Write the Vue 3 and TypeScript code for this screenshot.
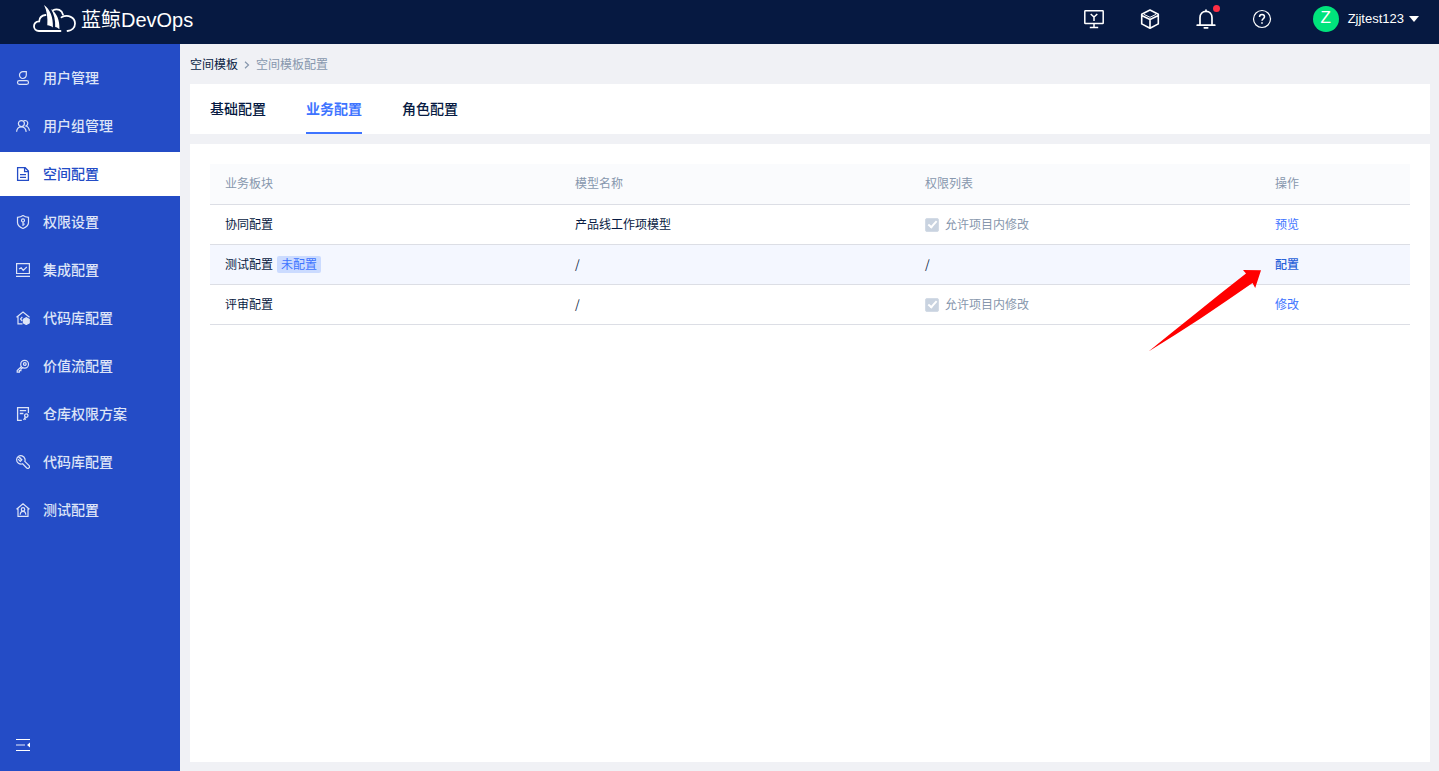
<script setup lang="ts">
import { ref } from 'vue'

interface MenuItem {
  icon: string
  label: string
}

interface Row {
  name: string
  badge?: string
  model: string
  editable: boolean
  action: string
  current?: boolean
}

const menu: MenuItem[] = [
  { icon: 'user', label: '用户管理' },
  { icon: 'group', label: '用户组管理' },
  { icon: 'doc', label: '空间配置' },
  { icon: 'shield', label: '权限设置' },
  { icon: 'chart', label: '集成配置' },
  { icon: 'repo', label: '代码库配置' },
  { icon: 'key', label: '价值流配置' },
  { icon: 'plan', label: '仓库权限方案' },
  { icon: 'wrench', label: '代码库配置' },
  { icon: 'home', label: '测试配置' },
]
const activeMenu = ref(2)

const tabs: string[] = ['基础配置', '业务配置', '角色配置']
const activeTab = ref(1)

const columns: string[] = ['业务板块', '模型名称', '权限列表', '操作']
const rows: Row[] = [
  { name: '协同配置', model: '产品线工作项模型', editable: true, action: '预览' },
  { name: '测试配置', badge: '未配置', model: '/', editable: false, action: '配置', current: true },
  { name: '评审配置', model: '/', editable: true, action: '修改' },
]
</script>

<template>
  <div class="app">
    <header class="header">
      <a class="brand" href="#">
        <svg class="brand-mark" viewBox="0 0 44 28" aria-hidden="true">
          <g fill="none" stroke="#fff" stroke-width="1.8" stroke-linecap="round">
            <path d="M28 26H6.500C3.500 26 1.500 24 1.500 21.300c0-2.800 2.200-4.800 5.200-5 .2-3.500 2.600-5.800 6.300-6.300" />
            <path d="M20.500 5.200c4.500-2.200 9-.2 10 4.500" />
            <path d="M29 12.300c6.500-3.300 13.500 0 13.500 6.200 0 4-3 7-7.500 7.500" />
          </g>
          <path fill="#fff" d="M11.500 0c6 4.500 9.200 11.500 8.900 22.500-1.600-1.300-3.400-2-5.600-2.200C15.300 12.500 14.500 6 11.500 0z" />
          <path fill="#fff" d="M18.500 4c6 4.500 8.700 11 8.400 20.300-1.300-1.300-2.600-2-4.200-2.300C23 15 21.500 9 18.500 4z" />
        </svg>
        <span class="brand-cn">蓝鲸</span>
        <span class="brand-en">DevOps</span>
      </a>

      <div class="tools">
        <button class="tool" type="button" aria-label="工作台">
          <svg viewBox="0 0 20 20" fill="none" stroke="currentColor" stroke-width="1.500">
            <rect x=".8" y="1.800" width="18.400" height="12.800" rx=".6" />
            <path d="M10 14.600v3.600M5.800 18.600h8.400M6.700 5l3.300 3 3.300-3M10 8v4" />
          </svg>
        </button>
        <button class="tool" type="button" aria-label="应用">
          <svg viewBox="0 0 20 20" fill="none" stroke="currentColor" stroke-width="1.600" stroke-linejoin="round">
            <path d="M10 1l8.300 4.200v9.700L10 19.200l-8.300-4.300V5.200zM10 10.500V19M1.700 6.500L10 10.500l8.300-4" />
            <path d="M4 5.400L10 8.300l6-2.900" stroke-width="1" />
          </svg>
        </button>
        <button class="tool" type="button" aria-label="通知">
          <svg viewBox="0 0 20 20" fill="none" stroke="currentColor" stroke-width="1.700" stroke-linecap="round">
            <path d="M4 16V8.800C4 5 6.600 2.400 10 2.400S16 5 16 8.800V16M1.200 16.200h17.600M8.300 18.800h3.400M10 1v1" />
          </svg>
          <span class="dot"></span>
        </button>
        <button class="tool" type="button" aria-label="帮助">
          <svg viewBox="0 0 20 20" fill="none" stroke="currentColor">
            <circle cx="10" cy="10" r="8.500" stroke-width="1.200" />
            <path d="M7.500 8c0-1.500 1-2.500 2.500-2.500s2.500 1 2.500 2.300c0 1.700-2.500 1.900-2.500 4" stroke-width="1.500" />
            <path d="M10 13.200v1.600" stroke-width="1.600" />
          </svg>
        </button>
        <button class="account" type="button">
          <span class="avatar">Z</span>
          <span class="account-name">Zjjtest123</span>
          <span class="caret"></span>
        </button>
      </div>
    </header>

    <div class="body">
      <aside class="sidebar">
        <nav class="menu">
          <a
            v-for="(item, i) in menu"
            :key="i"
            href="#"
            class="menu-item"
            :class="{ active: i === activeMenu }"
            @click.prevent="activeMenu = i"
          >
            <svg class="menu-icon" viewBox="0 0 14 14" fill="none" stroke="currentColor" stroke-width="1.200" aria-hidden="true">
              <template v-if="item.icon === 'user'">
                <path d="M10.300.7H7.200a3.400 3.400 0 1 0 3.100 3.400z" />
                <rect x="1.500" y="9.700" width="11" height="3.600" rx="1.800" />
              </template>
              <template v-else-if="item.icon === 'group'">
                <circle cx="5.400" cy="4.600" r="3" />
                <path d="M.6 12.800c.2-3 2.200-5 4.800-5s4.400 2 4.800 5M7.600 1.800c2.600-1 4.600.8 4.100 3-.2 1-.9 1.700-1.700 2.200 1.900.6 3.200 2.300 3.400 4.800" />
              </template>
              <template v-else-if="item.icon === 'doc'">
                <path d="M1.600.7h7.600l3.200 3.400v9.200H1.600zM8.600.9v3.700h3.600M4 7.700h6M4 10.300h6" stroke-width="1.300" />
              </template>
              <template v-else-if="item.icon === 'shield'">
                <path d="M7 .6c1.600 1.100 3.300 1.600 5.500 1.800v5.200c0 2.800-2.200 4.600-5.500 5.900-3.300-1.300-5.500-3.100-5.500-5.900V2.400C3.700 2.200 5.400 1.700 7 .6z" />
                <circle cx="7" cy="5.400" r="1.500" />
                <path d="M7 7v4M7 9.200h1.700" />
              </template>
              <template v-else-if="item.icon === 'chart'">
                <path d="M.6.700h12.800v9.800H.6zM0 13.300h14M3 6l2.200-1.200 2 2.600L10.800 4" stroke-width="1.200" />
              </template>
              <template v-else-if="item.icon === 'repo'">
                <path d="M.5 6.200L7 1l6.500 5.200M2 5.400v7.500h4.500M6.300 5.800L4.500 8l1.800 2.200" stroke-width="1.200" />
                <path d="M10.300 6.700l2.900 1.700v3.400l-2.900 1.700-2.900-1.700V8.400z" fill="currentColor" />
              </template>
              <template v-else-if="item.icon === 'key'">
                <circle cx="8.600" cy="5.200" r="3.900" />
                <circle cx="8.800" cy="5" r="1.400" />
                <path d="M5.500 7.500l-4.300 4v1.700h2.200v-1.600h1.500v-1.500l2-1.500" />
              </template>
              <template v-else-if="item.icon === 'plan'">
                <path d="M12.400 6V.700H1.600v12.600h4.200M3.800 3.700h6.400M3.800 6.500h3.600" stroke-width="1.300" />
                <circle cx="10.300" cy="8.600" r="1.700" stroke-width="1.300" />
                <path d="M9.300 10l-1.700 3M8.500 11.500l1.500.9" stroke-width="1.300" />
              </template>
              <template v-else-if="item.icon === 'wrench'">
                <path d="M2.300 1.500C4.600-.1 8 .8 8.900 3.700c.3 1 .2 1.900-.1 2.700l4.300 4.200c1.300 1.700-.8 3.700-2.400 2.400L6.600 8.800C3.600 9.800.6 7.700.6 4.700c0-1.200.6-2.300 1.700-3.200zM2.300 1.500l3 3M2.200 4.200L4.300 6.300l1.600-1.600-2.300-2.400" />
              </template>
              <template v-else>
                <path d="M.5 6.300L7 .8l6.500 5.500M2 5.200v8.100h10V5.200" />
                <circle cx="7" cy="6.400" r="1.700" />
                <path d="M4.200 11.800c.1-2.200 1.200-3.400 2.800-3.400s2.700 1.200 2.800 3.400" />
              </template>
            </svg>
            <span>{{ item.label }}</span>
          </a>
        </nav>
        <button class="collapse" type="button" aria-label="收起菜单">
          <svg viewBox="0 0 14 14" aria-hidden="true">
            <path d="M0 1.500h14M0 12.500h14" stroke="#fff" stroke-width="1.200" />
            <path d="M0 7h9" stroke="#fff" stroke-width="1.500" opacity=".6" />
            <path d="M14 4.500v5L11 7z" fill="#fff" />
          </svg>
        </button>
      </aside>

      <main class="content">
        <nav class="crumbs">
          <a href="#">空间模板</a>
          <svg viewBox="0 0 6 8" fill="none" stroke="#8797ad" stroke-width="1.200" aria-hidden="true">
            <path d="M1 .8L4.500 4 1 7.200" />
          </svg>
          <span>空间模板配置</span>
        </nav>

        <div class="tabs" role="tablist">
          <button
            v-for="(tab, i) in tabs"
            :key="tab"
            class="tab"
            type="button"
            role="tab"
            :aria-selected="i === activeTab"
            :class="{ active: i === activeTab }"
            @click="activeTab = i"
          >
            {{ tab }}
          </button>
        </div>

        <section class="panel">
          <table class="table">
            <thead>
              <tr>
                <th v-for="c in columns" :key="c" scope="col">{{ c }}</th>
              </tr>
            </thead>
            <tbody>
              <tr v-for="row in rows" :key="row.name" :class="{ current: row.current }">
                <td>
                  <div class="cell">
                    <span>{{ row.name }}</span>
                    <span v-if="row.badge" class="badge">{{ row.badge }}</span>
                  </div>
                </td>
                <td :class="{ empty: row.model === '/' }">{{ row.model }}</td>
                <td :class="{ empty: !row.editable }">
                  <label v-if="row.editable" class="check">
                    <input type="checkbox" checked disabled />
                    <span>允许项目内修改</span>
                  </label>
                  <template v-else>/</template>
                </td>
                <td class="action">
                  <a href="#">{{ row.action }}</a>
                  <svg v-if="row.current" class="pointer" viewBox="0 0 114 82" aria-hidden="true">
                    <path d="M113 .3L95 0l3 3.500C64 30 32 56 .5 81.500 36 60 70 37 104.500 13l2.700 5z" fill="#f00" />
                  </svg>
                </td>
              </tr>
            </tbody>
          </table>
        </section>
      </main>
    </div>
  </div>
</template>

<style>
body {
  margin: 0;
}
</style>

<style scoped>
.app {
  display: flex;
  flex-direction: column;
  min-height: 100vh;
  background: #f0f1f5;
  color: #071a42;
  font-family: "Liberation Sans", "Noto Sans CJK SC", sans-serif;
  font-size: 12px;
  line-height: 18px;
}

.app *,
.app *::before,
.app *::after {
  box-sizing: border-box;
}

a {
  color: inherit;
  text-decoration: none;
}

button {
  padding: 0;
  border: 0;
  background: none;
  color: inherit;
  font: inherit;
  cursor: pointer;
}

svg {
  display: block;
}

.header {
  display: flex;
  align-items: center;
  justify-content: space-between;
  height: 44px;
  padding: 0 20px 6px 32px;
  background: #061941;
  color: #fff;
}

.brand {
  display: flex;
  align-items: center;
  font-size: 20px;
  line-height: 28px;
}

.brand-mark {
  width: 45px;
  height: 28px;
  margin-right: 4px;
}

.brand-cn,
.brand-en {
  padding-top: 2px;
}

.tools {
  display: flex;
  align-items: center;
  gap: 36px;
}

.tool {
  position: relative;
  width: 20px;
  height: 20px;
}

.tool svg {
  width: 20px;
  height: 20px;
}

.dot {
  position: absolute;
  top: -4px;
  right: -4px;
  width: 7px;
  height: 7px;
  border-radius: 50%;
  background: #ff2e44;
}

.account {
  display: flex;
  align-items: center;
  margin-left: 5px;
  font-size: 13px;
}

.avatar {
  width: 26px;
  height: 26px;
  margin-right: 9px;
  border-radius: 50%;
  background: #00e37c;
  font-size: 17px;
  line-height: 24px;
  text-align: center;
}

.caret {
  margin-left: 5px;
  border: 5px solid transparent;
  border-top: 6px solid #fff;
  border-bottom: 0;
}

.body {
  display: flex;
  flex: 1;
}

.sidebar {
  display: flex;
  flex: none;
  flex-direction: column;
  justify-content: space-between;
  width: 180px;
  padding: 12px 0 19px;
  background: #244cc6;
  color: #dde4f7;
}

.menu {
  display: flex;
  flex-direction: column;
  gap: 4px;
}

.menu-item {
  display: flex;
  align-items: center;
  gap: 13px;
  height: 44px;
  padding-left: 16px;
  font-size: 14px;
  font-weight: 500;
}

.menu-item.active {
  background: #fff;
  color: #244cc6;
}

.menu-icon {
  width: 14px;
  height: 14px;
}

.collapse {
  width: 14px;
  height: 14px;
  margin-left: 16px;
}

.content {
  display: flex;
  flex: 1;
  flex-direction: column;
  min-width: 0;
  padding: 0 9px 9px 10px;
}

.crumbs {
  display: flex;
  align-items: center;
  gap: 6px;
  height: 40px;
  padding-top: 2px;
}

.crumbs svg {
  width: 6px;
  height: 8px;
}

.crumbs span {
  color: #8797ad;
}

.tabs {
  display: flex;
  gap: 40px;
  height: 50px;
  margin-bottom: 10px;
  padding: 0 20px;
  background: #fff;
}

.tab {
  border-top: 2px solid transparent;
  border-bottom: 2px solid transparent;
  font-size: 14px;
  font-weight: 500;
}

.tab.active {
  border-bottom-color: #3e74ff;
  color: #3e74ff;
  font-weight: 700;
}

.panel {
  flex: 1;
  padding: 20px;
  background: #fff;
}

.table {
  width: 100%;
  table-layout: fixed;
  border-collapse: separate;
  border-spacing: 0;
}

th,
td {
  height: 40px;
  padding: 0 15px;
  border-bottom: 1px solid #dcdee5;
  text-align: left;
  font-weight: 400;
}

th {
  width: 29.17%;
  height: 41px;
  background: #fafbfd;
  color: #8797ad;
}

th:last-child {
  width: auto;
}

.current td {
  background: #f4f7ff;
}

td.empty {
  padding-bottom: 2px;
  font-family: "Noto Sans CJK SC", sans-serif;
}

.cell {
  display: flex;
  align-items: center;
  gap: 4px;
}

.badge {
  padding: 1px 4px 0;
  border-radius: 2px;
  background: #cbdbff;
  color: #3e74ff;
  line-height: 16px;
}

.check {
  display: flex;
  align-items: center;
  gap: 6px;
  color: #8797ad;
}

.check input {
  position: relative;
  width: 14px;
  height: 14px;
  margin: 0;
  border: 1px solid #d3dbe6;
  border-radius: 2px;
  background: #c9d3e0;
  appearance: none;
}

.check input::after {
  position: absolute;
  top: 0;
  left: 4px;
  width: 5px;
  height: 9px;
  border: solid #fff;
  border-width: 0 2px 2px 0;
  content: "";
  transform: rotate(42deg);
}

.action {
  position: relative;
  color: #3e74ff;
}

.current .action {
  color: #2862d9;
  font-weight: 500;
}

.pointer {
  position: absolute;
  top: 25px;
  left: -112px;
  z-index: 1;
  width: 114px;
  height: 82px;
  pointer-events: none;
}
</style>
